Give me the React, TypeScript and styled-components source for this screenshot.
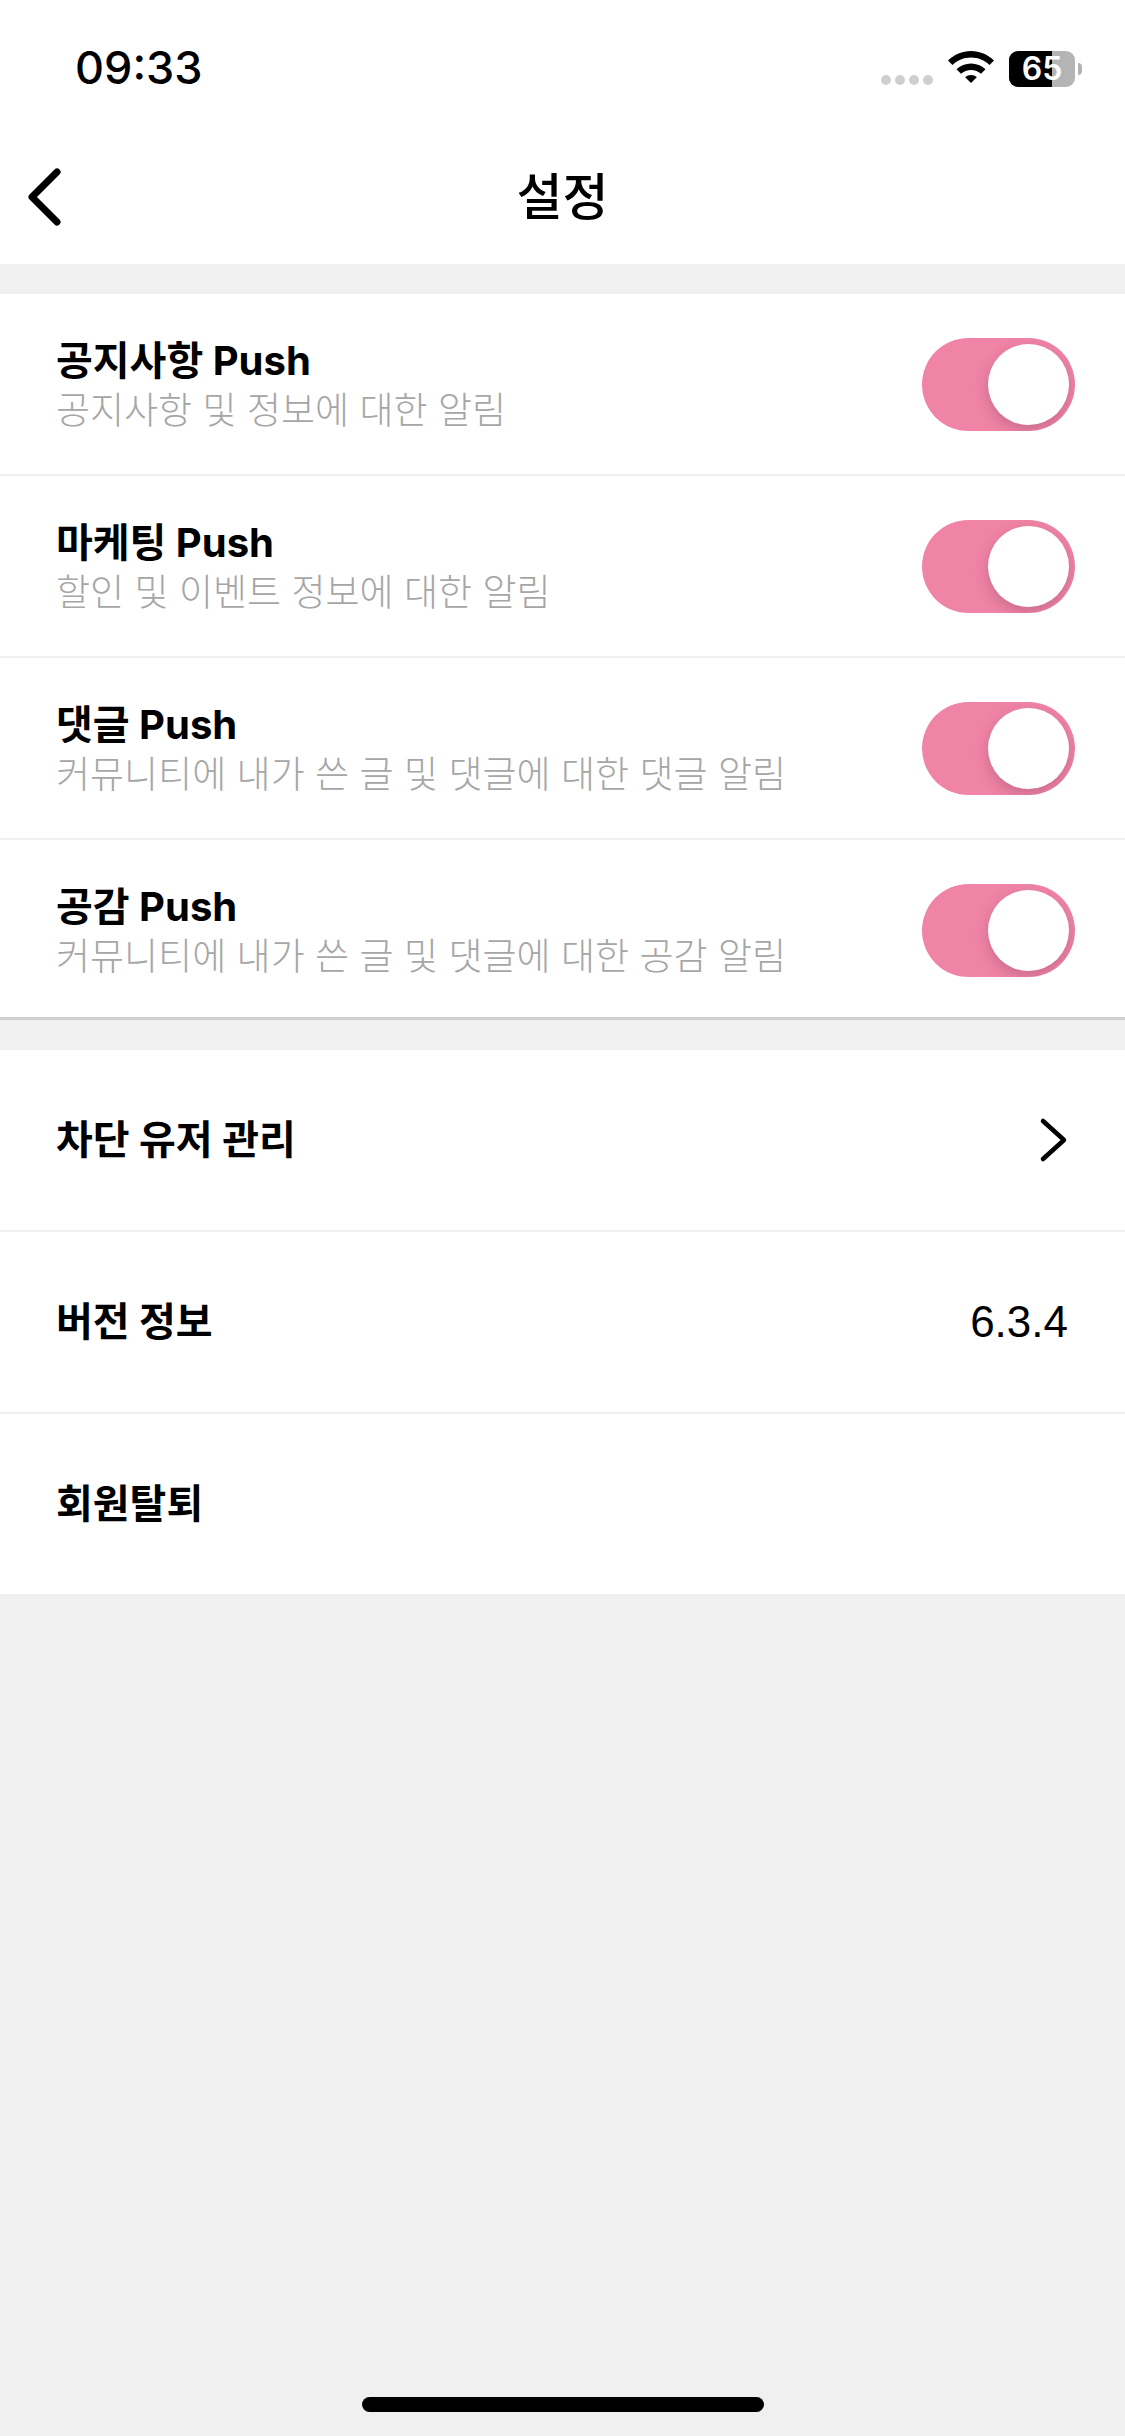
import styled, { createGlobalStyle } from 'styled-components'

const FONT = 'Inter, "Noto Sans CJK KR", "Liberation Sans", sans-serif'

const GlobalStyle = createGlobalStyle`
  html, body {
    margin: 0;
    padding: 0;
    background: #f0f0f0;
  }
`

const $Screen = styled.div`
  position: relative;
  width: 1125px;
  height: 2436px;
  overflow: hidden;
  background: #f0f0f0;
  font-family: ${FONT};
  color: #000;
`

const $Top = styled.div`
  background: #fff;
  height: 264px;
`

const $StatusBar = styled.div`
  height: 132px;
  display: flex;
  justify-content: space-between;
  padding: 0 43px 0 75px;
  box-sizing: border-box;
`

const $Clock = styled.div`
  font-size: 45px;
  font-weight: 500;
  line-height: 48px;
  margin-top: 44px;
`

const $StatusIcons = styled.div`
  display: flex;
  align-items: flex-start;
  margin-top: 51px;
`

const $Dots = styled.div`
  display: flex;
  gap: 4px;
  margin: 24px 15px 0 0;
`

const $Dot = styled.span`
  width: 10px;
  height: 10px;
  border-radius: 50%;
  background: #cfcfcf;
`

const $Wifi = styled.svg`
  width: 46px;
  height: 34px;
  margin-right: 15px;
`

const $Battery = styled.div`
  position: relative;
  width: 66px;
  height: 36px;
  border-radius: 9px;
  overflow: hidden;
  background: #b4b4b4;
  color: #fff;
  font-size: 32px;
  font-weight: 600;
  line-height: 36px;
  text-align: center;
`

const $BatteryFill = styled.div`
  position: absolute;
  inset: 0 23px 0 0;
  background: #000;
`

const $BatteryLabel = styled.span`
  position: relative;
`

const $BatteryCap = styled.div`
  width: 4px;
  height: 12px;
  margin: 12px 0 0 3px;
  border-radius: 0 6px 6px 0;
  background: #b4b4b4;
`

const $NavBar = styled.div`
  position: relative;
  height: 132px;
  display: flex;
  align-items: center;
  justify-content: center;
`

const $BackIcon = styled.svg`
  position: absolute;
  left: 26px;
  top: 35px;
  width: 38px;
  height: 60px;
`

const $NavTitle = styled.div`
  font-size: 50px;
  font-weight: 500;
  line-height: 60px;
  margin-top: -2px;
`

const $Row = styled.div`
  height: 182px;
  box-sizing: border-box;
  display: flex;
  align-items: center;
  justify-content: space-between;
  padding: 0 50px 0 56px;
  border-bottom: 2px solid #f0f0f0;

  &:last-child {
    height: 180px;
    border-bottom: none;
  }
`

const $Group = styled.div<{ $divider?: boolean }>`
  margin-top: 30px;
  background: #fff;

  ${({ $divider }) => $divider && `
    ${$Row}:last-child {
      padding-top: 3px;
      border-bottom: 3px solid #d0d0d0;
    }
  `}
`

const $RowText = styled.div`
  display: flex;
  flex-direction: column;
`

const $RowTitle = styled.div`
  font-size: 40px;
  font-weight: 700;
  line-height: 48px;
`

const $RowSubtitle = styled.div`
  font-size: 37px;
  font-weight: 300;
  line-height: 48px;
  margin-bottom: -4px;
  padding-top: 2px;
  color: #a6a6a6;
`

const $Toggle = styled.div`
  position: relative;
  width: 153px;
  height: 93px;
  border-radius: 47px;
  overflow: hidden;
  background: #f084a6;
`

const $Thumb = styled.div`
  position: absolute;
  top: 6px;
  right: 6px;
  width: 81px;
  height: 81px;
  border-radius: 50%;
  background: #fff;
  box-shadow: 0 5px 14px rgba(110, 50, 75, 0.3);
`

const $ChevronIcon = styled.svg`
  width: 30px;
  height: 46px;
  margin-right: 6px;
`

const $Version = styled.div`
  font-family: "Liberation Sans", sans-serif;
  font-size: 44px;
  line-height: 48px;
  margin-right: 7px;
`

const $HomeBar = styled.div`
  position: absolute;
  left: 362px;
  top: 2397px;
  width: 402px;
  height: 15px;
  border-radius: 8px;
  background: #000;
`

const pushRows = [
  { title: '공지사항 Push', subtitle: '공지사항 및 정보에 대한 알림' },
  { title: '마케팅 Push', subtitle: '할인 및 이벤트 정보에 대한 알림' },
  { title: '댓글 Push', subtitle: '커뮤니티에 내가 쓴 글 및 댓글에 대한 댓글 알림' },
  { title: '공감 Push', subtitle: '커뮤니티에 내가 쓴 글 및 댓글에 대한 공감 알림' },
]

const App = () => (
  <$Screen>
    <GlobalStyle />
    <$Top>
      <$StatusBar>
        <$Clock>09:33</$Clock>
        <$StatusIcons>
          <$Dots>
            <$Dot /><$Dot /><$Dot /><$Dot />
          </$Dots>
          <$Wifi viewBox="0 0 46 34">
            <path d="M23 0C14 0 6.500 3.500 0 9.500L4.500 14C9.500 9.200 16 6.500 23 6.500S36.500 9.200 41.500 14L46 9.500C39.500 3.500 32 0 23 0Z" />
            <path d="M23 12.500C17.500 12.500 12.500 14.700 8.500 18.300L13 22.800C15.700 20.400 19.200 19 23 19S30.300 20.400 33 22.800L37.500 18.300C33.500 14.700 28.500 12.500 23 12.500Z" />
            <path d="M23 24C20.800 24 18.800 24.800 17.200 26.200L23 32L28.800 26.200C27.200 24.800 25.200 24 23 24Z" />
          </$Wifi>
          <$Battery>
            <$BatteryFill />
            <$BatteryLabel>65</$BatteryLabel>
          </$Battery>
          <$BatteryCap />
        </$StatusIcons>
      </$StatusBar>
      <$NavBar>
        <$BackIcon viewBox="0 0 38 60" fill="none" stroke="#000" strokeWidth="7" strokeLinecap="round" strokeLinejoin="round">
          <path d="M31 5L6 30L31 55" />
        </$BackIcon>
        <$NavTitle>설정</$NavTitle>
      </$NavBar>
    </$Top>

    <$Group $divider>
      {pushRows.map((row) => (
        <$Row key={row.title}>
          <$RowText>
            <$RowTitle>{row.title}</$RowTitle>
            <$RowSubtitle>{row.subtitle}</$RowSubtitle>
          </$RowText>
          <$Toggle>
            <$Thumb />
          </$Toggle>
        </$Row>
      ))}
    </$Group>

    <$Group>
      <$Row>
        <$RowTitle>차단 유저 관리</$RowTitle>
        <$ChevronIcon viewBox="0 0 30 46" fill="none" stroke="#000" strokeWidth="4.500" strokeLinecap="round" strokeLinejoin="round">
          <path d="M4 4L25 23L4 42" />
        </$ChevronIcon>
      </$Row>
      <$Row>
        <$RowTitle>버전 정보</$RowTitle>
        <$Version>6.3.4</$Version>
      </$Row>
      <$Row>
        <$RowTitle>회원탈퇴</$RowTitle>
      </$Row>
    </$Group>

    <$HomeBar />
  </$Screen>
)

export default App
